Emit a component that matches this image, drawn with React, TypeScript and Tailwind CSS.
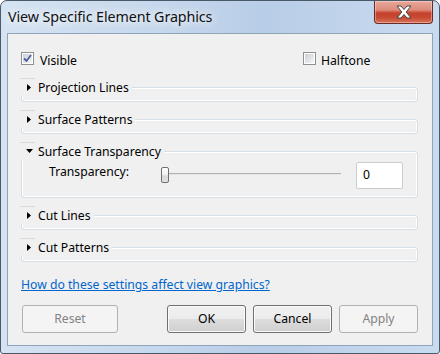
import React from "react";

const Checkbox = ({ checked }: { checked?: boolean }) => (
  <div className="w-[13px] h-[13px] border border-[#8e8f8f] bg-white p-[1px] shrink-0">
    <div className="w-full h-full bg-gradient-to-br from-[#cbcfd5] to-[#f7f7f7] relative">
      {checked && (
        <svg width="11" height="11" viewBox="0 0 11 11" className="absolute -left-[1px] -top-[1px]">
          <path d="M2 5.5 L4.5 8 L9 2" stroke="#4a5f9c" strokeWidth="1.8" fill="none" />
        </svg>
      )}
    </div>
  </div>
);

const Group = ({
  title,
  open,
  className,
  children,
}: {
  title: string;
  open?: boolean;
  className?: string;
  children?: React.ReactNode;
}) => (
  <div
    className={`mt-[17px] border border-[#d5dfe5] rounded-[3px] shadow-[inset_0_0_0_1px_#fff] ${className ?? "h-[15px]"}`}
  >
    <div className="-mt-[10px] -ml-[2px] h-[18px] flex items-center w-fit bg-[#f0f0f0] pr-[3px]">
      <div className="w-[15px] h-full border-t border-[#dadada] flex items-center">
        {open ? (
          <svg width="8" height="5" viewBox="0 0 8 5" className="ml-[6px]">
            <path d="M0 0 H7 L3.5 4 Z" fill="#000" />
          </svg>
        ) : (
          <svg width="5" height="8" viewBox="0 0 5 8" className="ml-[7px]">
            <path d="M0 0 V7 L4 3.5 Z" fill="#000" />
          </svg>
        )}
      </div>
      <span className="ml-[3px] leading-[14px] translate-y-[1px]">{title}</span>
    </div>
    {children}
  </div>
);

const Button = ({ label, disabled, className }: { label: string; disabled?: boolean; className?: string }) =>
  disabled ? (
    <div
      className={`h-[28px] rounded-[3px] border border-[#adb2b5] bg-[#f4f4f4] flex items-center justify-center text-[#838383] ${className}`}
    >
      {label}
    </div>
  ) : (
    <div
      className={`h-[28px] rounded-[3px] border border-[#707070] bg-[linear-gradient(#f2f2f2_0%,#ebebeb_50%,#dddddd_51%,#cfcfcf_100%)] shadow-[inset_0_0_0_1px_#fbfbfb] flex items-center justify-center text-black ${className}`}
    >
      {label}
    </div>
  );

export default function App() {
  return (
    <div className="w-[440px] h-[354px] bg-white font-['Noto_Sans',sans-serif] text-[12.2px] text-black">
      <div className="w-full h-full rounded-t-[7px] rounded-b-[3px] border border-[#4a5968] bg-[linear-gradient(90deg,#d5e3f2_0%,#c6d8ed_35%,#b8cde7_60%,#c9dbef_100%)] flex flex-col">
        <div className="h-[32px] flex items-start">
          <div className="pl-[7px] pt-[5px] text-[14.3px] text-[#111] [text-shadow:0_0_8px_#fff,0_0_12px_#fff] tracking-[-0.1px]">
            View Specific Element Graphics
          </div>
          <div className="ml-auto mr-[6px] w-[59px] h-[23px] rounded-b-[4px] border border-t-0 border-[#6b2b22] bg-[linear-gradient(#e8a89a_0%,#dd8d7c_40%,#c5402b_55%,#c84a33_75%,#d87458_100%)] shadow-[inset_0_0_0_1px_rgba(255,255,255,0.35)] flex items-center justify-center">
            <svg width="20" height="14" viewBox="0 0 20 14">
              <path
                d="M3 1 H7 L10 4.5 L13 1 H17 L12.2 7 L17 13 H13 L10 9.5 L7 13 H3 L7.8 7 Z"
                fill="#fff"
                stroke="#444"
                strokeWidth="1"
                strokeLinejoin="round"
              />
            </svg>
          </div>
        </div>
        <div className="mx-[6px] h-[313px] border border-[#8fa3b9] bg-[#f0f0f0] pl-[13px] pr-[14px] pt-[18px] flex flex-col">
          <div className="flex h-[13px] items-center">
            <div className="w-[282px] flex items-center">
              <Checkbox checked />
              <span className="ml-[6px] leading-[14px] translate-y-[2px]">Visible</span>
            </div>
            <div className="flex items-center">
              <Checkbox />
              <span className="ml-[5px] leading-[14px] translate-y-[2px]">Halftone</span>
            </div>
          </div>
          <div className="h-[5px]" />
          <Group title="Projection Lines" />
          <Group title="Surface Patterns" />
          <Group title="Surface Transparency" open className="h-[47px]">
            <div className="flex items-start mt-[2px] h-[27px]">
              <div className="w-[139px] pl-[27px] pt-[3px] leading-[14px]">Transparency:</div>
              <div className="w-[180px] relative mt-[5px] h-[16px]">
                <div className="absolute left-0 right-0 top-[6px] h-[2px] border-t border-[#b0b0b0] bg-[#e6e6e6] border-b-white" />
                <div className="absolute left-0 top-0 w-[8px] h-[16px] rounded-[2px] border border-[#707070] bg-[linear-gradient(#fdfdfd_0%,#f0f0f0_50%,#d8d8d8_55%,#e2e2e2_100%)]" />
              </div>
              <div className="ml-[15px] w-[47px] h-[27px] border border-[#c9cdd1] rounded-[2px] bg-white flex items-center pl-[6px] text-[#000]">
                0
              </div>
            </div>
          </Group>
          <Group title="Cut Lines" />
          <Group title="Cut Patterns" />
          <a className="mt-[16px] leading-[14px] text-[#0066cc] underline w-fit">
            How do these settings affect view graphics?
          </a>
          <div className="mt-[13px] flex">
            <Button label="Reset" disabled className="ml-[1px] w-[96px]" />
            <Button label="OK" className="ml-auto w-[79px]" />
            <Button label="Cancel" className="ml-[7px] w-[79px]" />
            <Button label="Apply" disabled className="ml-[7px] w-[79px]" />
          </div>
        </div>
      </div>
    </div>
  );
}
